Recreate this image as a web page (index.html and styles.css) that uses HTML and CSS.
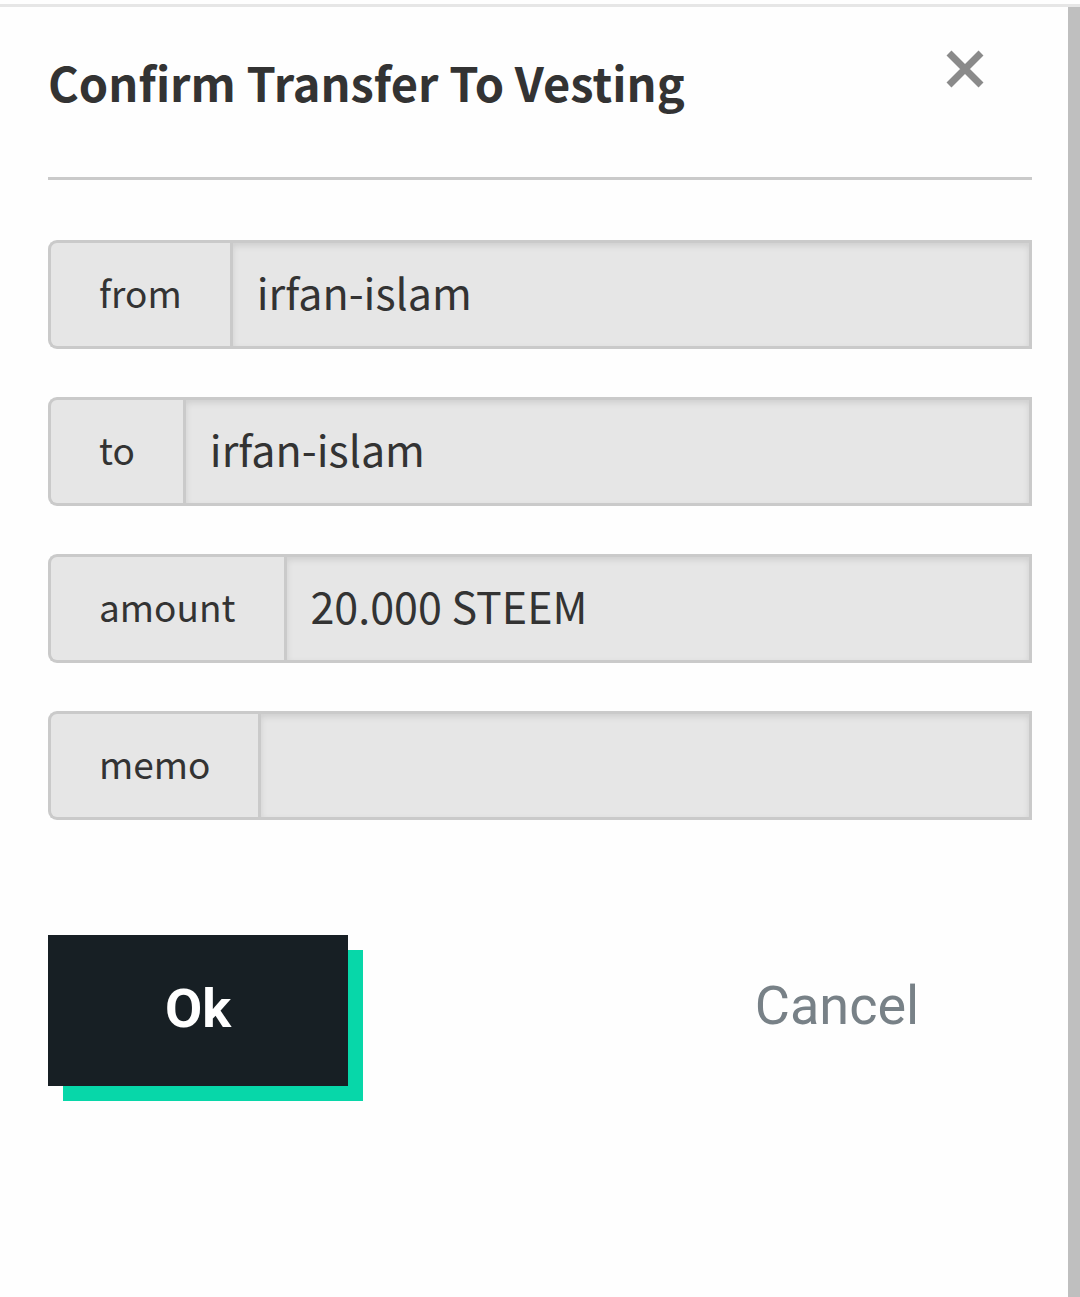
FILE: index.html
```html
<!DOCTYPE html>
<html lang="en">
<head>
    <meta charset="UTF-8">
    <meta name="viewport" content="width=device-width, initial-scale=1"/>
    <title>Confirm Transfer To Vesting</title>
    <link rel="stylesheet" href="styles.css">
</head>
<body>
    <div class="top-line"></div>
    <div class="page">
        <form class="confirm" onsubmit="return false">
            <div class="confirm-header">
                <h1 class="title">Confirm Transfer To Vesting</h1>
                <button type="button" class="btn-close" aria-label="Close">
                    <svg viewBox="0 0 38 38" width="38" height="38">
                        <path d="M3 3 L35 35 M35 3 L3 35" stroke="currentColor" stroke-width="7" fill="none"/>
                    </svg>
                </button>
            </div>

            <div class="fields">
                <div class="input-group">
                    <label class="input-label" for="from">from</label>
                    <input class="input-field" type="text" id="from" value="irfan-islam" readonly>
                </div>
                <div class="input-group">
                    <label class="input-label" for="to">to</label>
                    <input class="input-field" type="text" id="to" value="irfan-islam" readonly>
                </div>
                <div class="input-group">
                    <label class="input-label" for="amount">amount</label>
                    <input class="input-field" type="text" id="amount" value="20.000 STEEM" readonly>
                </div>
                <div class="input-group">
                    <label class="input-label" for="memo">memo</label>
                    <input class="input-field" type="text" id="memo" value="" readonly>
                </div>
            </div>

            <div class="actions">
                <button type="submit" class="btn btn-ok">Ok</button>
                <button type="button" class="btn btn-cancel">Cancel</button>
            </div>
        </form>
        <div class="scroll-track"></div>
    </div>
</body>
</html>
```

FILE: styles.css
```css
*{
    box-sizing: border-box;
}
body{
    display: flex;
    flex-direction: column;
    min-height: 100vh;
    margin: 0;
    background-color: #fefefe;
    color: #333;
    font-family: "Noto Sans CJK SC", "Noto Sans", sans-serif;
}
.top-line{
    height: 7px;
    border-bottom: 3px solid #e6e6e6;
}
.page{
    display: flex;
    flex: 1;
}
.confirm{
    flex: 1;
    min-width: 0;
    padding: 41px 36px 48px 48px;
}
.scroll-track{
    width: 12px;
    background-color: #bfbfbf;
}

/* header */
.confirm-header{
    display: flex;
    justify-content: space-between;
    align-items: flex-start;
    padding-bottom: 61px;
    border-bottom: 3px solid #cacaca;
}
.title{
    margin: 0;
    font-size: 47px;
    font-weight: 600;
    line-height: 68px;
}
.btn-close{
    margin: 2px 48px 0 0;
    padding: 0;
    border: 0;
    background: none;
    color: #8a8a8a;
    cursor: pointer;
}
.btn-close svg{
    display: block;
}

/* fields */
.fields{
    display: flex;
    flex-direction: column;
    gap: 48px;
    padding-top: 60px;
}
.input-group{
    display: flex;
    height: 109px;
}
.input-label,
.input-field{
    border: 3px solid #cacaca;
    background-color: #e6e6e6;
}
.input-label{
    display: flex;
    align-items: center;
    padding: 0 48px 6px;
    border-right: 0;
    border-radius: 9px 0 0 9px;
    font-size: 37px;
}
.input-field{
    flex: 1;
    min-width: 0;
    padding: 0 24px 8px;
    border-radius: 0;
    box-shadow: inset 0 3px 6px rgba(10, 10, 10, 0.1);
    color: #333;
    font-family: inherit;
    font-size: 43px;
    outline: none;
}

/* buttons */
.actions{
    display: flex;
    justify-content: space-between;
    align-items: flex-start;
    padding-top: 115px;
}
.btn{
    width: 300px;
    padding: 0 0 4px;
    border: 0;
    font-family: Roboto, sans-serif;
    font-size: 54px;
    cursor: pointer;
}
.btn-ok{
    height: 151px;
    background-color: #171f24;
    box-shadow: 15px 15px 0 #07d7a9;
    color: #fff;
    font-weight: 700;
}
.btn-cancel{
    height: 144px;
    margin-right: 45px;
    background: none;
    color: #788187;
}
```
